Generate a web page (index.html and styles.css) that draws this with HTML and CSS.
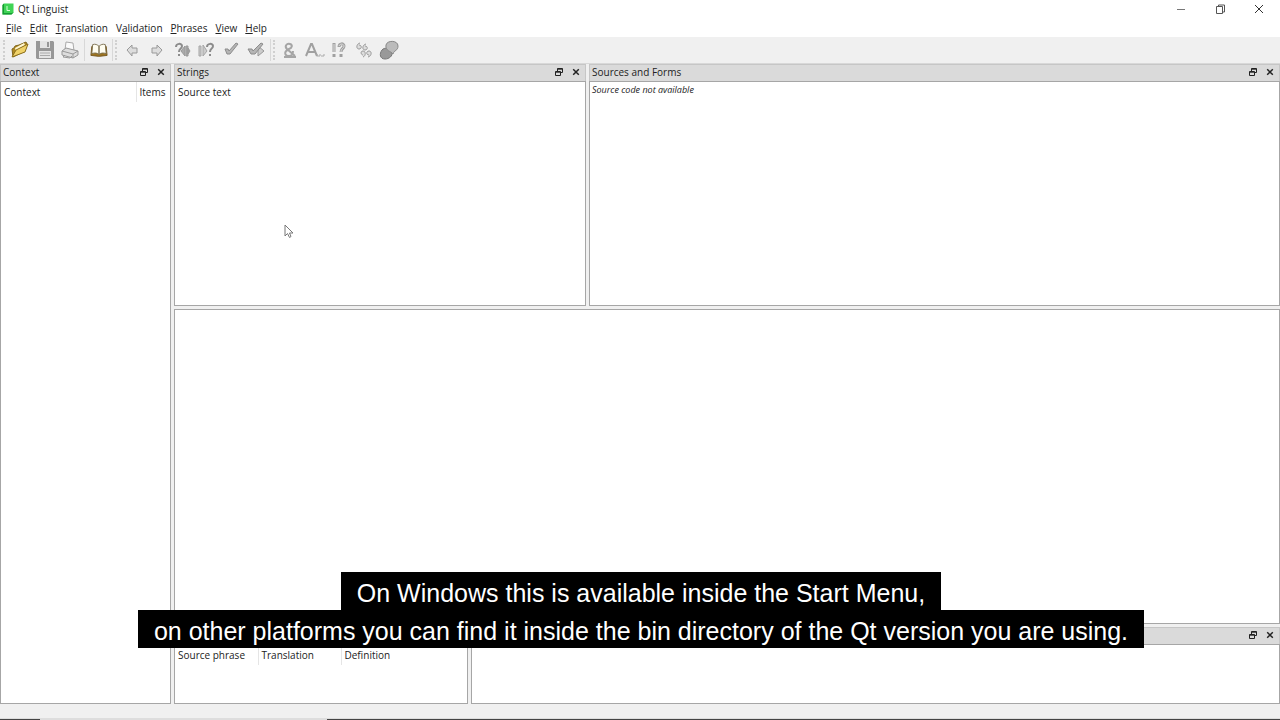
FILE: index.html
```html
<!DOCTYPE html>
<html lang="en">
<head>
  <meta charset="UTF-8">
  <meta name="viewport" content="width=device-width, initial-scale=1.0">
  <title>Qt Linguist</title>
  <link rel="stylesheet" href="styles.css">
</head>
<body>
  <!-- Shared dock icons -->
  <svg class="defs" aria-hidden="true">
    <symbol id="float" viewBox="0 0 10 10">
      <path d="M3.5 4V1.5h5v4H7M3.5 2.2h5M1.5 4.5h5v4h-5zM1.5 5.2h5" fill="none" stroke="#222"/>
    </symbol>
    <symbol id="close" viewBox="0 0 10 10">
      <path d="M2.2 2.2l5.6 5.6M7.8 2.2L2.2 7.8" fill="none" stroke="#222" stroke-width="1.5"/>
    </symbol>
  </svg>

  <header class="titlebar">
    <svg class="logo" viewBox="0 0 12 12">
      <path d="M2 0.5h9.500v9l-2 2H0.500V2z" fill="#3fd455"/>
      <path d="M0.5 2L2 0.500V10l-1.500 1.500zM2 10h7.500l2-0.500-2 2h-9z" fill="#169a33"/>
      <path d="M5 3v4.500h3" fill="none" stroke="#d8ffd8"/>
    </svg>
    <h1>Qt Linguist</h1>
    <div class="window-buttons">
      <button aria-label="Minimize"><svg viewBox="0 0 10 10"><path d="M1 5.500h8" stroke="#777"/></svg></button>
      <button aria-label="Restore"><svg viewBox="0 0 10 10"><path d="M1.5 2.500h6v7h-6zM3.500 2.500v-1.500h6v7h-2" fill="none" stroke="#555"/></svg></button>
      <button aria-label="Close"><svg viewBox="0 0 10 10"><path d="M1 1l8 8M9 1L1 9" stroke="#333"/></svg></button>
    </div>
  </header>

  <nav class="menubar">
    <button><u>F</u>ile</button>
    <button><u>E</u>dit</button>
    <button><u>T</u>ranslation</button>
    <button>V<u>a</u>lidation</button>
    <button><u>P</u>hrases</button>
    <button><u>V</u>iew</button>
    <button><u>H</u>elp</button>
  </nav>

  <div class="toolbar">
    <span class="handle"></span>
    <div class="group files">
      <button aria-label="Open">
        <svg viewBox="0 0 20 20">
          <path d="M2 9l2-1 1-2 4-1 7-3 1 2-2 7-12 6z" fill="#b08a20" stroke="#80651c"/>
          <path d="M5 8l9-5 1 2-9 6z" fill="#fff6cf"/>
          <path d="M2 17l4-7 12-6-3 8z" fill="#f0d268" stroke="#8c6f1c"/>
        </svg>
      </button>
      <button aria-label="Save">
        <svg viewBox="0 0 20 20">
          <path d="M1 1h17l1 1v17H2l-1-1z" fill="#979797"/>
          <path d="M5 1h10v7H5zM4 11h12v7H4z" fill="#e4e4e4"/>
          <path d="M12 2h2v5h-2z" fill="#979797"/>
          <path d="M5 13h10M5 15.500h10" stroke="#aaa"/>
        </svg>
      </button>
      <button aria-label="Print">
        <svg viewBox="0 0 20 20">
          <path d="M5 10l1-8 7 1 1 8" fill="#fafafa" stroke="#aaa"/>
          <path d="M2 11l4-3 12 3v4l-5 3-11-3z" fill="#ddd" stroke="#999"/>
          <path d="M2 11l11 3 5-3M13 14v4M5 15l-2 2 7 1 2-2" fill="none" stroke="#999"/>
        </svg>
      </button>
    </div>
    <span class="separator"></span>
    <div class="group single">
      <button aria-label="Open phrase book">
        <svg class="book" viewBox="0 0 20 20">
          <path d="M2 6L1 16l8 1h2l8-1-1-10z" fill="#9d7420" stroke="#73551c"/>
          <path d="M3 4c3-1 5 0 7 2v9c-2-2-5-2-8-1zM17 4c-3-1-5 0-7 2v9c2-2 5-2 8-1z" fill="#fffdf0" stroke="#776b4c"/>
        </svg>
      </button>
    </div>
    <span class="separator"></span>
    <span class="handle"></span>
    <div class="group moves">
      <button aria-label="Previous">
        <svg viewBox="0 0 20 20"><path d="M5 10l5-5v3h5v5h-5v3z" fill="#ddd" stroke="#999"/></svg>
      </button>
      <button aria-label="Next">
        <svg viewBox="0 0 20 20"><path d="M15 10l-5-5v3H5v5h5v3z" fill="#ddd" stroke="#999"/></svg>
      </button>
      <button aria-label="Previous unfinished">
        <svg viewBox="0 0 20 20">
          <path d="M4 7c0-4 6-4 6-1 0 3-3 2-3 6M7 14v2" fill="none" stroke="#8c8c8c" stroke-width="2"/>
          <path d="M9 11l4-5v10zM14 6h2v10h-2zM16 8l2 3-2 3z" fill="#aaa" stroke="#999"/>
        </svg>
      </button>
      <button aria-label="Next unfinished">
        <svg viewBox="0 0 20 20">
          <path d="M3 6h2v10H3zM7 5l4 6-4 5z" fill="#ccc" stroke="#a5a5a5"/>
          <path d="M11 7c0-4 6-4 6-1 0 3-3 2-3 6M14 14v2" fill="none" stroke="#8c8c8c" stroke-width="2"/>
        </svg>
      </button>
      <button aria-label="Done">
        <svg viewBox="0 0 20 20"><path d="M4 9h3l1 2 7-8 2 1-8 10H6z" fill="#b5b5b5" stroke="#8c8c8c"/></svg>
      </button>
      <button aria-label="Done and next">
        <svg viewBox="0 0 20 20">
          <path d="M12 6l6 5-6 5z" fill="#ccc" stroke="#999"/>
          <path d="M2 9h4l1 2 8-8 2 1-8 10H5z" fill="#b5b5b5" stroke="#8c8c8c"/>
        </svg>
      </button>
    </div>
    <span class="separator"></span>
    <span class="handle"></span>
    <div class="group checks">
      <button aria-label="Accelerators">
        <svg viewBox="0 0 20 20"><path d="M15 16L7 9c-3-3 0-6 3-5 3 1 2 4-1 5-6 3-4 7 0 7 3 0 4-2 4-5M4 17h12" fill="none" stroke="#a5a5a5" stroke-width="2"/></svg>
      </button>
      <button aria-label="Surrounding whitespace">
        <svg viewBox="0 0 20 20">
          <path d="M1 16L6 4h1l5 12M3 12h7" fill="none" stroke="#a0a0a0" stroke-width="2"/>
          <path d="M12 14v2h3v-2M16 16h3v-2" fill="none" stroke="#aaa"/>
        </svg>
      </button>
      <button aria-label="Ending punctuation">
        <svg viewBox="0 0 20 20">
          <path d="M5 3v9M5 14v3M10 7c0-4 5-4 5-1 0 3-3 2-3 6M12 14v3" fill="none" stroke="#a0a0a0" stroke-width="3"/>
          <path d="M5 4v8M10 6c1-3 5-2 5 0 0 3-3 2-3 6" fill="none" stroke="#ddd"/>
        </svg>
      </button>
      <button aria-label="Phrase matches">
        <svg viewBox="0 0 20 20">
          <path d="M6 3c-4 1-4 6-1 6s3-4 0-4M12 4c-4 1-4 6-1 6s3-4 0-4M9 17c3-1 3-6 0-6s-2 4 0 4M14 17c4-1 4-6 1-6s-3 4 0 4" fill="#ddd" stroke="#999" stroke-width="1"/>
        </svg>
      </button>
      <button aria-label="Place markers">
        <svg viewBox="0 0 20 20">
          <path d="M3 10c2-3 9-2 10 2 1 4-3 7-7 7-5 0-6-5-3-9z" fill="#999" stroke="#777"/>
          <path d="M7 5c1-5 12-5 12 1 0 5-4 4-5 8-2-3-8-3-7-9z" fill="#bbb" stroke="#888"/>
        </svg>
      </button>
    </div>
  </div>

  <main class="workspace">
    <section class="dock context">
      <div class="dock-title">
        <h2>Context</h2>
        <button aria-label="Float"><svg><use href="#float"/></svg></button>
        <button aria-label="Close"><svg><use href="#close"/></svg></button>
      </div>
      <div class="pane">
        <table>
          <thead><tr><th>Context</th><th class="items">Items</th></tr></thead>
        </table>
      </div>
    </section>

    <div class="right-side">
      <div class="row top">
        <section class="dock strings">
          <div class="dock-title">
            <h2>Strings</h2>
            <button aria-label="Float"><svg><use href="#float"/></svg></button>
            <button aria-label="Close"><svg><use href="#close"/></svg></button>
          </div>
          <div class="pane">
            <table>
              <thead><tr><th>Source text</th></tr></thead>
            </table>
          </div>
        </section>
        <section class="dock sources">
          <div class="dock-title">
            <h2>Sources and Forms</h2>
            <button aria-label="Float"><svg><use href="#float"/></svg></button>
            <button aria-label="Close"><svg><use href="#close"/></svg></button>
          </div>
          <div class="pane">
            <p class="note">Source code not available</p>
          </div>
        </section>
      </div>

      <div class="pane editor"></div>

      <div class="row bottom">
        <section class="dock phrases">
          <div class="dock-title"></div>
          <div class="pane">
            <table>
              <thead>
                <tr><th class="phrase">Source phrase</th><th class="phrase">Translation</th><th>Definition</th></tr>
              </thead>
            </table>
          </div>
        </section>
        <section class="dock warnings">
          <div class="dock-title">
            <h2></h2>
            <button aria-label="Float"><svg><use href="#float"/></svg></button>
            <button aria-label="Close"><svg><use href="#close"/></svg></button>
          </div>
          <div class="pane"></div>
        </section>
      </div>
    </div>
  </main>

  <footer class="statusbar"></footer>
  <div class="taskbar"><span></span></div>

  <svg class="cursor" viewBox="0 0 10 15">
    <path d="M1 1v11l2.500-2.500L5.500 13.500l1.500-1-1.500-3.500H9z" fill="#fff" stroke="#777"/>
  </svg>

  <div class="captions">
    <p>On Windows this is available inside the Start Menu,</p>
    <p>on other platforms you can find it inside the bin directory of the Qt version you are using.</p>
  </div>
</body>
</html>
```
FILE: styles.css
```css
* {
  box-sizing: border-box;
}
body {
  margin: 0;
  height: 100vh;
  display: flex;
  flex-direction: column;
  overflow: hidden;
  background-color: #f0f0f0;
  color: #222;
  font-family: "Open Sans", "Noto Sans", sans-serif;
  font-size: 10px;
  line-height: 14px;
}
h1, h2, p {
  margin: 0;
  font-size: inherit;
  font-weight: normal;
}
button {
  padding: 0;
  border: none;
  background: none;
  color: inherit;
  font: inherit;
}
svg {
  display: block;
}
.defs {
  display: none;
}

/* Title bar */
.titlebar {
  display: flex;
  align-items: center;
  height: 20px;
  padding: 0 2px 2px;
  background-color: #fff;
}
.logo {
  width: 12px;
  height: 12px;
  margin-right: 4px;
}
.window-buttons {
  display: flex;
  margin-left: auto;
}
.window-buttons button {
  display: flex;
  justify-content: center;
  width: 39px;
}
.window-buttons svg {
  width: 10px;
  height: 10px;
}

/* Menu bar */
.menubar {
  display: flex;
  height: 17px;
  padding: 0 2px 2px;
  background-color: #fff;
}
.menubar button {
  padding: 0 4px;
}

/* Tool bar */
.toolbar {
  display: flex;
  align-items: center;
  height: 27px;
  padding-left: 3px;
  border-bottom: 1px solid #d8d8d8;
}
.handle {
  width: 2px;
  height: 20px;
  margin-right: 3px;
  border-left: 2px dotted #d0d0d0;
}
.separator {
  width: 1px;
  height: 22px;
  margin: 0 2px;
  background-color: #d8d8d8;
}
.group {
  display: flex;
}
.group button {
  flex: 1;
  display: flex;
  justify-content: center;
}
.group svg {
  width: 20px;
  height: 20px;
}
.group .book {
  width: 18px;
}
.files {
  width: 74px;
}
.single {
  width: 23px;
}
.moves {
  width: 148px;
}
.checks {
  width: 123px;
}

/* Docks */
.workspace {
  flex: 1;
  display: flex;
  gap: 3px;
  min-height: 0;
}
.right-side {
  flex: 1;
  display: flex;
  flex-direction: column;
  gap: 3px;
}
.row {
  display: flex;
  gap: 3px;
}
.dock {
  display: flex;
  flex-direction: column;
}
.context {
  width: 171px;
}
.strings {
  width: 412px;
}
.phrases {
  width: 294px;
}
.sources, .warnings {
  flex: 1;
}
.top {
  height: 242px;
}
.bottom {
  height: 77px;
}
.dock-title {
  display: flex;
  align-items: center;
  gap: 7px;
  height: 17px;
  padding: 0 4px 2px 2px;
  background-color: #dadada;
  border: 1px solid #c6c6c6;
  border-bottom: none;
}
.dock-title h2 {
  flex: 1;
}
.dock-title svg {
  width: 10px;
  height: 10px;
}
.pane {
  flex: 1;
  background-color: #fff;
  border: 1px solid #a6a6a6;
}
table {
  width: 100%;
  table-layout: fixed;
  border-collapse: collapse;
}
th {
  height: 20px;
  padding: 0 3px;
  font-weight: normal;
  text-align: left;
}
th + th {
  border-left: 1px solid #e5e5e5;
}
.items {
  width: 34px;
}
.phrase {
  width: 83px;
}
.note {
  padding: 1px 2px;
  font-size: 9px;
  font-style: italic;
}

/* Bottom bars */
.statusbar {
  height: 14px;
}
.taskbar {
  height: 2px;
  padding-left: 40px;
  background-color: #444;
  border-top: 1px solid #ddd;
}
.taskbar span {
  display: block;
  width: 287px;
  height: 1px;
  background-color: #ddd;
}

/* Mouse pointer and video captions lie over the window */
.cursor {
  position: absolute;
  left: 284px;
  top: 224px;
  width: 10px;
  height: 15px;
}
.captions {
  position: absolute;
  left: 2px;
  right: 0;
  bottom: 72px;
  display: flex;
  flex-direction: column;
  align-items: center;
}
.captions p {
  padding: 4px 16px 0;
  background-color: #000;
  color: #fff;
  font-family: "Liberation Sans", Arial, sans-serif;
  font-size: 25px;
  line-height: 34px;
  white-space: nowrap;
}
```
